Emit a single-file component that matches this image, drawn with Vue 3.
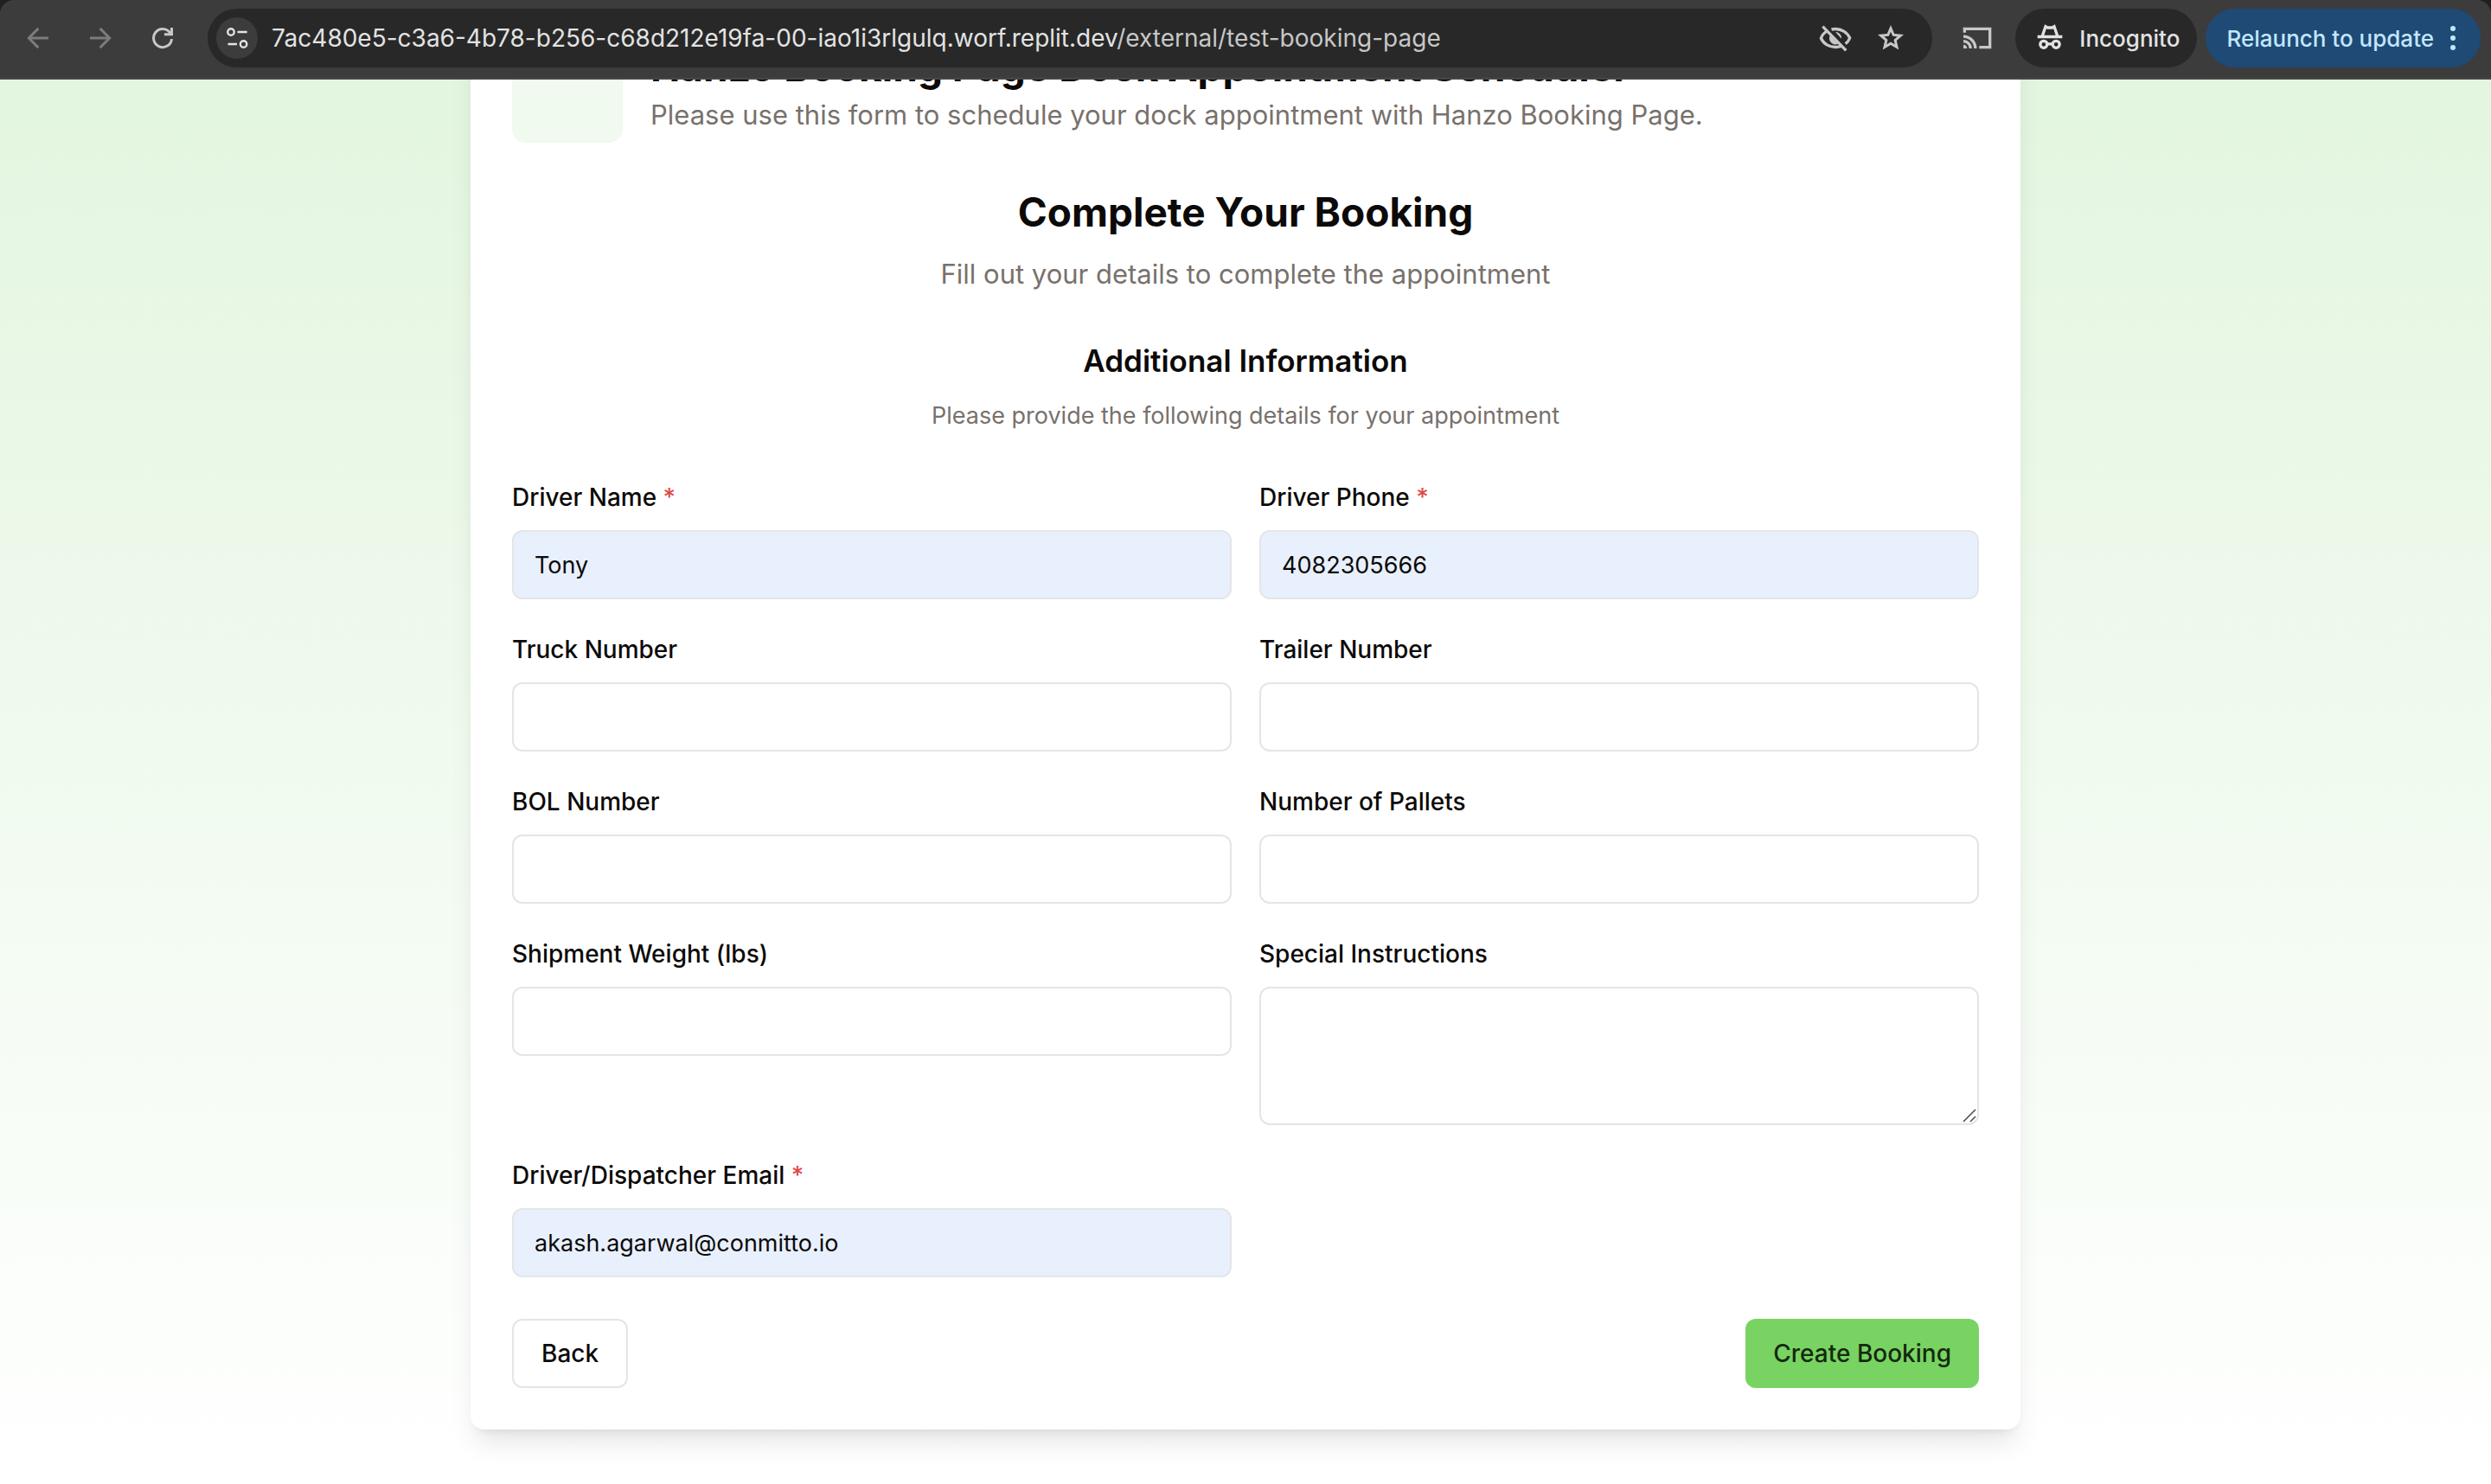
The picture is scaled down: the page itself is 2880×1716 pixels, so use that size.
<script setup>
import { reactive } from 'vue'

const fields = [
  { id: 'driverName', label: 'Driver Name', required: true, type: 'text' },
  { id: 'driverPhone', label: 'Driver Phone', required: true, type: 'tel' },
  { id: 'truckNumber', label: 'Truck Number', type: 'text' },
  { id: 'trailerNumber', label: 'Trailer Number', type: 'text' },
  { id: 'bolNumber', label: 'BOL Number', type: 'text' },
  { id: 'pallets', label: 'Number of Pallets', type: 'text' },
  { id: 'weight', label: 'Shipment Weight (lbs)', type: 'text' },
  { id: 'instructions', label: 'Special Instructions', type: 'textarea' },
  { id: 'email', label: 'Driver/Dispatcher Email', required: true, type: 'email' },
]

const form = reactive({
  driverName: 'Tony',
  driverPhone: '4082305666',
  truckNumber: '',
  trailerNumber: '',
  bolNumber: '',
  pallets: '',
  weight: '',
  instructions: '',
  email: 'akash.agarwal@conmitto.io',
})
</script>

<template>
  <div class="window">
    <div class="toolbar-back">
      <header class="toolbar">
        <nav class="nav">
          <button type="button" class="icon-btn dim" aria-label="Back">
            <svg viewBox="0 0 24 24"><path d="M20 12H5.500M12.200 4.600L4.900 12l7.300 7.400" /></svg>
          </button>
          <button type="button" class="icon-btn dim" aria-label="Forward">
            <svg viewBox="0 0 24 24"><path d="M4 12h14.500M11.800 4.600L19.100 12l-7.300 7.400" /></svg>
          </button>
          <button type="button" class="icon-btn" aria-label="Reload">
            <svg viewBox="0 0 24 24"><path d="M19 12.700A7 7 0 1 1 17.800 8.100M19 4v5.200h-5.700" /></svg>
          </button>
        </nav>
        <div class="omnibox">
          <button type="button" class="site-info" aria-label="Site information">
            <svg class="small" viewBox="0 0 24 24"><circle cx="6" cy="6" r="3.200" /><path d="M12.500 6H22M3 18h9" /><circle cx="18.500" cy="18" r="3.200" /></svg>
          </button>
          <span class="url">7ac480e5-c3a6-4b78-b256-c68d212e19fa-00-iao1i3rlgulq.worf.replit.dev<span class="path">/external/test-booking-page</span></span>
          <button type="button" class="icon-btn" aria-label="Third-party cookies blocked">
            <svg class="big" viewBox="0 0 24 24"><path d="M5.800 7.200C4.200 8.400 2.800 10 2 12c1.600 3.800 5.500 6.300 10 6.300 1.500 0 3-.3 4.300-.8M9.300 6c.9-.2 1.800-.3 2.700-.3 4.500 0 8.400 2.500 10 6.300-.6 1.500-1.600 2.900-3 4M3.200 4l16.200 16.600" /><path class="fill" d="M8.300 10.200a4.200 4.200 0 0 0 5.600 5.700zM12 7.800a4.200 4.200 0 0 1 4.200 4.700z" /></svg>
          </button>
          <button type="button" class="icon-btn" aria-label="Bookmark this tab">
            <svg viewBox="0 0 24 24"><path class="fill" d="m8.850 16.825 3.150-1.900 3.150 1.925-.825-3.600 2.775-2.400-3.650-.325-1.450-3.400-1.450 3.375-3.650.325 2.775 2.425ZM5.825 21l1.625-7.025L2 9.250l7.200-.625L12 2l2.800 6.625 7.200.625-5.450 4.725L18.175 21 12 17.275Z" /></svg>
          </button>
        </div>
        <button type="button" class="icon-btn cast" aria-label="Cast">
          <svg class="big" viewBox="0 0 24 24"><path d="M3.200 8.200V5.600h17.600v12.800h-7.400M2.400 10.900a8.300 8.300 0 0 1 8.300 8.300M2.400 14.200a5 5 0 0 1 5 5" /><path class="fill" d="M2.400 16.600a2.600 2.600 0 0 1 2.600 2.600H2.400z" /></svg>
        </button>
        <button type="button" class="pill">
          <svg class="big" viewBox="0 0 24 24"><path d="M6.800 10.500L9 4l1.400.8h3.200L15 4l2.200 6.500M3.400 11.100h17.200" /><circle cx="7.700" cy="16.400" r="2.400" /><circle cx="16.300" cy="16.400" r="2.400" /><path d="M10.100 16.100h3.800" /></svg>
          Incognito
        </button>
        <button type="button" class="pill update">
          Relaunch to update
          <svg class="dots" viewBox="0 0 8 28"><circle cx="4" cy="3" r="3" /><circle cx="4" cy="14" r="3" /><circle cx="4" cy="25" r="3" /></svg>
        </button>
      </header>
    </div>

    <main class="viewport">
      <div class="page">
        <section class="card">
          <div class="brand">
            <div class="logo"></div>
            <div>
              <h1>Hanzo Booking Page Dock Appointment Scheduler</h1>
              <p class="lead">Please use this form to schedule your dock appointment with Hanzo Booking Page.</p>
            </div>
          </div>

          <div class="intro">
            <h2>Complete Your Booking</h2>
            <p class="lead">Fill out your details to complete the appointment</p>
          </div>

          <div class="intro section">
            <h3>Additional Information</h3>
            <p class="hint">Please provide the following details for your appointment</p>
          </div>

          <form @submit.prevent>
            <div class="grid">
              <div v-for="f in fields" :key="f.id" class="field">
                <label :for="f.id">{{ f.label }}<span v-if="f.required" class="req"> *</span></label>
                <div v-if="f.type === 'textarea'" class="area">
                  <textarea :id="f.id" v-model="form[f.id]"></textarea>
                  <svg class="grip" viewBox="0 0 16 16"><path d="M1 15L15 1M9 15l6-6" /></svg>
                </div>
                <input v-else :id="f.id" v-model="form[f.id]" :type="f.type" :class="{ filled: form[f.id] }" />
              </div>
            </div>
            <div class="actions">
              <button type="button" class="btn">Back</button>
              <button type="submit" class="btn primary">Create Booking</button>
            </div>
          </form>
        </section>
      </div>
    </main>
  </div>
</template>

<style>
body {
  margin: 0;
}
</style>

<style scoped>
* {
  box-sizing: border-box;
}
.window {
  display: flex;
  flex-direction: column;
  height: 100vh;
  overflow: hidden;
  background: #fff;
  color: #0c0a09;
  font-family: Inter, "Liberation Sans", sans-serif;
}
h1, h2, h3, p {
  margin: 0;
}
button, input, textarea {
  font: inherit;
  color: inherit;
}
.toolbar-back {
  flex: none;
  background: #1f2020;
}
.toolbar {
  display: flex;
  align-items: center;
  height: 92px;
  padding: 0 12px 2px 20px;
  background: #3c3c3c;
  border-bottom: 2px solid #474747;
  border-radius: 16px 16px 0 0;
  color: #e3e3e3;
  font-size: 26px;
}
.nav {
  display: flex;
  gap: 24px;
  margin-right: 28px;
}
.icon-btn {
  display: flex;
  align-items: center;
  justify-content: center;
  width: 48px;
  height: 48px;
  padding: 0;
  border: 0;
  background: none;
  color: #c7c7c7;
}
.dim {
  color: #7c7c7c;
}
svg {
  width: 36px;
  height: 36px;
  flex: none;
  fill: none;
  stroke: currentColor;
  stroke-width: 2;
}
svg.small {
  width: 28px;
  height: 28px;
}
svg.big {
  width: 40px;
  height: 40px;
}
svg .fill {
  fill: currentColor;
  stroke: none;
}
.omnibox {
  display: flex;
  flex: 1;
  align-items: center;
  gap: 16px;
  height: 68px;
  padding: 0 24px 0 10px;
  border-radius: 34px;
  background: #282828;
}
.site-info {
  display: flex;
  align-items: center;
  justify-content: center;
  width: 48px;
  height: 48px;
  padding: 0;
  border: 0;
  border-radius: 50%;
  background: #3c3c3c;
}
.url {
  flex: 1;
  font-size: 28px;
  white-space: nowrap;
}
.path {
  color: #c7c7c7;
}
.cast {
  margin: 0 20px 0 28px;
}
.pill {
  display: flex;
  align-items: center;
  gap: 14px;
  height: 68px;
  padding: 0 20px;
  border: 0;
  border-radius: 34px;
  background: #282828;
  font-weight: 500;
}
.update {
  gap: 18px;
  margin-left: 10px;
  padding: 0 28px 0 24px;
  background: #1f4a75;
  color: #c2e7ff;
}
svg.dots {
  width: 8px;
  height: 28px;
  fill: currentColor;
  stroke: none;
}
/* The page is scrolled to its end, so its bottom edge meets the window's. */
.viewport {
  display: flex;
  flex: 1;
  flex-direction: column;
  justify-content: flex-end;
  min-height: 0;
  overflow: hidden;
}
.page {
  padding: 63px 32px;
  background: linear-gradient(to bottom, #e0f5dc, #fff);
}
.card {
  max-width: 1792px;
  margin: 0 auto;
  padding: 48px;
  border-radius: 16px;
  background: #fff;
  box-shadow: 0 20px 30px -6px rgba(0, 0, 0, 0.1), 0 8px 12px -8px rgba(0, 0, 0, 0.1);
}
.brand {
  display: flex;
  align-items: center;
  gap: 32px;
  margin-bottom: 48px;
}
.logo {
  width: 128px;
  height: 128px;
  border-radius: 16px;
  background: #f0faee;
}
h1, h2 {
  font-size: 46px;
  line-height: 64px;
  font-weight: 700;
}
.lead {
  font-size: 31px;
  line-height: 48px;
  color: #78716c;
}
.intro {
  display: flex;
  flex-direction: column;
  gap: 16px;
  text-align: center;
}
.section {
  margin: 48px 0;
}
h3 {
  font-size: 35px;
  line-height: 56px;
  font-weight: 600;
}
.hint {
  font-size: 27px;
  line-height: 40px;
  color: #78716c;
}
.grid {
  display: grid;
  grid-template-columns: 1fr 1fr;
  gap: 32px;
}
.field {
  display: flex;
  flex-direction: column;
  gap: 12px;
}
label {
  font-size: 28px;
  line-height: 52px;
  font-weight: 500;
}
.req {
  color: #de4b47;
}
input, textarea {
  display: block;
  width: 100%;
  height: 80px;
  padding: 16px 24px;
  border: 2px solid #e5e5e5;
  border-radius: 12px;
  background: #fff;
  font-size: 27px;
  line-height: 40px;
}
.area {
  position: relative;
}
textarea {
  height: 160px;
  resize: none;
}
svg.grip {
  position: absolute;
  right: 3px;
  bottom: 3px;
  width: 16px;
  height: 16px;
  color: #4a4a4a;
  stroke-width: 1.500;
}
.filled {
  background: #e8f0fe;
}
.actions {
  display: flex;
  justify-content: space-between;
  margin-top: 48px;
}
.btn {
  height: 80px;
  padding: 0 32px;
  border: 2px solid #e5e5e5;
  border-radius: 12px;
  background: #fff;
  font-size: 28px;
  font-weight: 500;
}
.primary {
  border: 0;
  background: #78d362;
  color: #14290f;
}
</style>
